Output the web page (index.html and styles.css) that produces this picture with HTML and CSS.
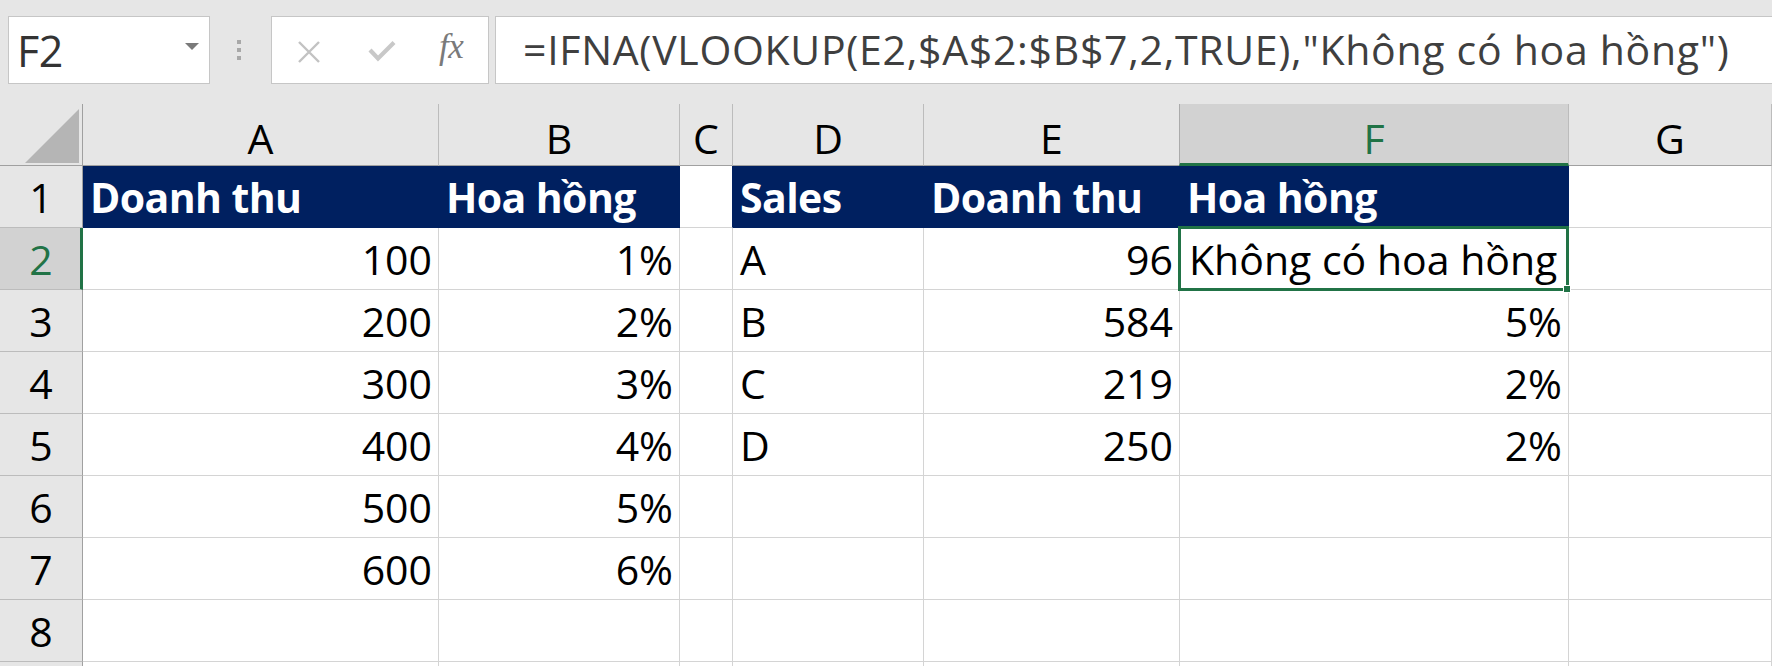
FILE: index.html
```html
<!DOCTYPE html>
<html lang="vi">
<head>
<meta charset="utf-8">
<title>Excel IFNA VLOOKUP</title>
<link rel="stylesheet" href="styles.css">
</head>
<body>
<div class="app">
  <div class="fbar">
    <div class="namebox">
      <span class="name">F2</span>
      <svg class="dd" width="14" height="8" viewBox="0 0 14 8"><path d="M0 0 H14 L7 7 Z" fill="#7a7a7a"/></svg>
    </div>
    <div class="grip"><i></i><i></i><i></i></div>
    <div class="fxbox">
      <svg class="ico-x" width="24" height="22" viewBox="0 0 24 22"><path d="M2 1 L22 21 M22 1 L2 21" stroke="#c2c2c2" stroke-width="2.4" fill="none"/></svg>
      <svg class="ico-ok" width="28" height="22" viewBox="0 0 28 22"><path d="M2 10 L10 18.5 L26 2.5" stroke="#c8c8c8" stroke-width="4.2" fill="none"/></svg>
      <span class="fx">fx</span>
    </div>
    <div class="formula">=IFNA(VLOOKUP(E2,$A$2:$B$7,2,TRUE),"Không có hoa hồng")</div>
  </div>

  <div class="sheet">
    <div class="ch corner"><svg width="54" height="54" viewBox="0 0 54 54"><path d="M54 0 V54 H0 Z" fill="#b5b5b5"/></svg></div>
    <div class="ch">A</div>
    <div class="ch">B</div>
    <div class="ch">C</div>
    <div class="ch">D</div>
    <div class="ch">E</div>
    <div class="ch sel">F</div>
    <div class="ch">G</div>

    <div class="rh">1</div>
    <div class="c hd">Doanh thu</div>
    <div class="c hd">Hoa hồng</div>
    <div class="c gap1"></div>
    <div class="c hd">Sales</div>
    <div class="c hd">Doanh thu</div>
    <div class="c hd">Hoa hồng</div>
    <div class="c"></div>

    <div class="rh rsel">2</div>
    <div class="c n">100</div>
    <div class="c n">1%</div>
    <div class="c"></div>
    <div class="c">A</div>
    <div class="c n">96</div>
    <div class="c active">Không có hoa hồng<span class="handle"></span></div>
    <div class="c"></div>

    <div class="rh">3</div>
    <div class="c n">200</div>
    <div class="c n">2%</div>
    <div class="c"></div>
    <div class="c">B</div>
    <div class="c n">584</div>
    <div class="c n">5%</div>
    <div class="c"></div>

    <div class="rh">4</div>
    <div class="c n">300</div>
    <div class="c n">3%</div>
    <div class="c"></div>
    <div class="c">C</div>
    <div class="c n">219</div>
    <div class="c n">2%</div>
    <div class="c"></div>

    <div class="rh">5</div>
    <div class="c n">400</div>
    <div class="c n">4%</div>
    <div class="c"></div>
    <div class="c">D</div>
    <div class="c n">250</div>
    <div class="c n">2%</div>
    <div class="c"></div>

    <div class="rh">6</div>
    <div class="c n">500</div>
    <div class="c n">5%</div>
    <div class="c"></div>
    <div class="c"></div>
    <div class="c"></div>
    <div class="c"></div>
    <div class="c"></div>

    <div class="rh">7</div>
    <div class="c n">600</div>
    <div class="c n">6%</div>
    <div class="c"></div>
    <div class="c"></div>
    <div class="c"></div>
    <div class="c"></div>
    <div class="c"></div>

    <div class="rh">8</div>
    <div class="c"></div>
    <div class="c"></div>
    <div class="c"></div>
    <div class="c"></div>
    <div class="c"></div>
    <div class="c"></div>
    <div class="c"></div>

    <div class="rh"></div>
    <div class="c"></div>
    <div class="c"></div>
    <div class="c"></div>
    <div class="c"></div>
    <div class="c"></div>
    <div class="c"></div>
    <div class="c"></div>
  </div>
</div>
</body>
</html>
```

FILE: styles.css
```css
* { box-sizing: border-box; }
html, body { margin: 0; padding: 0; }
body {
  background: #e6e6e6;
  font-family: "Open Sans", "Noto Sans", sans-serif;
  width: 1772px;
  height: 666px;
  overflow: hidden;
}
.app { width: 1772px; height: 666px; overflow: hidden; }

/* formula bar */
.fbar {
  height: 104px;
  display: flex;
  align-items: flex-start;
  padding: 16px 0 0 8px;
}
.namebox {
  width: 202px;
  height: 68px;
  background: #fff;
  border: 1px solid #c6c6c6;
  display: flex;
  align-items: center;
  justify-content: space-between;
  padding: 0 10px 0 8px;
}
.name { font-size: 43px; color: #333; line-height: 1; letter-spacing: -0.5px; }
.dd { margin-top: -6px; }
.grip {
  width: 61px;
  height: 68px;
  display: flex;
  flex-direction: column;
  align-items: center;
  justify-content: center;
  gap: 4px;
  padding-right: 3px;
}
.grip i { display: block; width: 4px; height: 4px; background: #a8a8a8; }
.fxbox {
  width: 218px;
  height: 68px;
  background: #fff;
  border: 1px solid #c6c6c6;
  display: flex;
  align-items: center;
  padding-left: 25px;
}
.ico-x { margin-right: 47px; margin-top: 4px; }
.ico-ok { margin-right: 43px; margin-top: 1px; }
.fx {
  font-family: "Liberation Serif", serif;
  font-style: italic;
  font-size: 35px;
  color: #7a7a7a;
  letter-spacing: -0.5px;
  margin-top: -6px;
}
.formula {
  flex: 1;
  height: 68px;
  margin-left: 6px;
  margin-right: -10px;
  background: #fff;
  border: 1px solid #c6c6c6;
  font-size: 41px;
  color: #3f3f3f;
  line-height: 64px;
  padding-left: 27px;
  letter-spacing: 0.7px;
  white-space: nowrap;
}

/* sheet grid */
.sheet {
  display: grid;
  grid-template-columns: 83px 356px 241px 53px 191px 256px 389px 1fr;
  grid-auto-rows: 62px;
  font-size: 41px;
  color: #000;
}
.ch {
  background: #e6e6e6;
  border-right: 1px solid #bcbcbc;
  border-bottom: 1px solid #a0a0a0;
  display: flex;
  align-items: center;
  justify-content: center;
  line-height: 1;
  padding-top: 8px;
}
.ch.corner {
  border-right-color: #a0a0a0;
  align-items: flex-end;
  justify-content: flex-end;
  padding: 0 3px 2px 0;
}
.ch.sel {
  background: #d2d2d2;
  color: #217346;
  border-bottom: 3px solid #217346;
  border-left: 1px solid #ababab;
  margin-left: -1px;
  padding-top: 10px;
}
.rh {
  background: #e6e6e6;
  border-right: 1px solid #a0a0a0;
  border-bottom: 1px solid #bcbcbc;
  display: flex;
  align-items: flex-end;
  justify-content: center;
  line-height: 41px;
  padding-bottom: 9px;
}
.rh.rsel {
  background: #d2d2d2;
  color: #217346;
  border-right: 3px solid #217346;
  padding-left: 2px;
}
.c {
  position: relative;
  background: #fff;
  border-right: 1px solid #d4d4d4;
  border-bottom: 1px solid #d4d4d4;
  display: flex;
  align-items: flex-end;
  justify-content: flex-start;
  line-height: 41px;
  padding: 0 7px 9px 7px;
  white-space: nowrap;
}
.c.n { justify-content: flex-end; padding-right: 6px; }
.c.hd {
  background: #002060;
  border-color: #002060;
  color: #fff;
  font-weight: 700;
  letter-spacing: -0.6px;
}
.c.gap1 { border-right-color: #002060; border-bottom-color: #d4d4d4; }
.c.active { padding-left: 9px; z-index: 2; }
.c.active::before {
  content: "";
  position: absolute;
  left: -2px;
  top: -2px;
  right: -1px;
  bottom: -2px;
  border: 3px solid #217346;
  pointer-events: none;
}
.handle {
  position: absolute;
  right: -3px;
  bottom: -4px;
  width: 8px;
  height: 8px;
  background: #217346;
  border: 1px solid #fff;
}
```
